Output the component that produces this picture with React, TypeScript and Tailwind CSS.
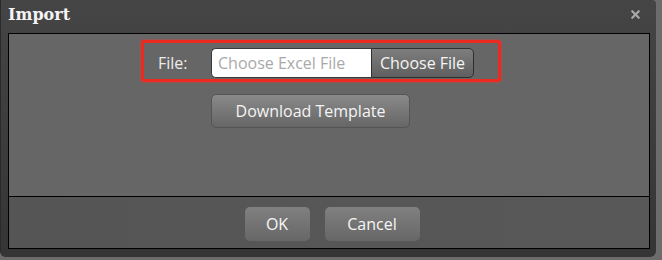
import { X } from "lucide-react";

const ui = { fontFamily: '"Open Sans", "Noto Sans", sans-serif' };

export default function App() {
  return (
    <div className="w-[662px] h-[260px] bg-[#6c6c6c]" style={ui}>
      <div className="w-[656px] h-[257px] rounded-b-[6px] rounded-tr-[4px] bg-gradient-to-b from-[#454545] to-[#353535] border-l border-[#2a2a2a] flex flex-col">
        {/* title bar */}
        <div className="h-[33px] flex items-center justify-between pl-[7px] pr-[14px]">
          <span
            className="text-[16px] font-bold text-[#f4f4f4] leading-none -mt-[4px]"
            style={{ fontFamily: '"DejaVu Serif", serif' }}
          >
            Import
          </span>
          <X className="w-[13px] h-[13px] text-[#a8a8a8] -mt-[4px]" strokeWidth={4} />
        </div>

        <div className="ml-[7px] w-[642px] border border-black flex flex-col">
          {/* body */}
          <div className="h-[163px] bg-[#666666] border-b border-black pt-[6px]">
            <div className="ml-[132px] w-[360px] h-[42px] border-[3px] border-[#ec2a20] rounded-[3px] flex items-center pt-[4px] pl-[14px] shadow-[0_0_2px_#ff3b2f]">
              <span className="text-[16px] text-[#ececec] w-[53px]">File:</span>
              <div className="flex h-[30px]">
                <div className="w-[160px] bg-white border border-[#3a3a3a] border-r-0 rounded-l-[5px] flex items-center pl-[6px] text-[16px] text-[#a9a9a9]">
                  Choose Excel File
                </div>
                <button className="w-[103px] bg-gradient-to-b from-[#7e7e7e] to-[#5f5f5f] border border-[#2f2f2f] rounded-r-[5px] text-[16px] text-[#f6f6f6] flex items-center justify-center">
                  Choose File
                </button>
              </div>
            </div>
            <button className="mt-[12px] ml-[202px] w-[199px] h-[34px] rounded-[5px] bg-gradient-to-b from-[#8a8a8a] to-[#666666] border border-[#555555] text-[16px] text-[#f4f4f4]">
              Download Template
            </button>
          </div>
          {/* footer */}
          <div className="h-[51px] bg-gradient-to-r from-[#555555] to-[#585858] flex items-center justify-center gap-[15px] pl-[6px] pt-[3px]">
            <button className="w-[65px] h-[34px] rounded-[5px] bg-gradient-to-b from-[#808080] to-[#676767] text-[16px] text-[#f6f6f6]">
              OK
            </button>
            <button className="w-[95px] h-[34px] rounded-[5px] bg-gradient-to-b from-[#808080] to-[#676767] text-[16px] text-[#f6f6f6]">
              Cancel
            </button>
          </div>
        </div>
      </div>
    </div>
  );
}
